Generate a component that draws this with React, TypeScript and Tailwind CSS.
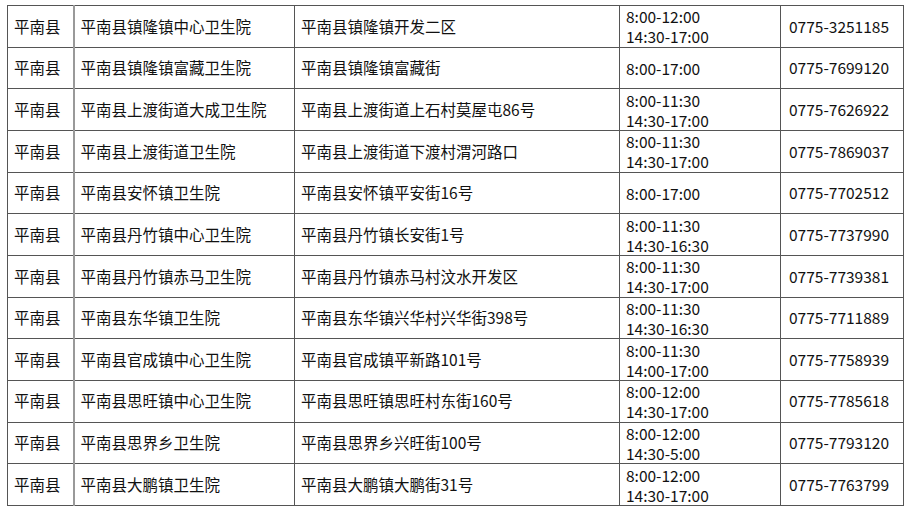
const rows: [string, string, string, string[], string][] = [
  ["平南县", "平南县镇隆镇中心卫生院", "平南县镇隆镇开发二区", ["8:00-12:00", "14:30-17:00"], "0775-3251185"],
  ["平南县", "平南县镇隆镇富藏卫生院", "平南县镇隆镇富藏街", ["8:00-17:00"], "0775-7699120"],
  ["平南县", "平南县上渡街道大成卫生院", "平南县上渡街道上石村莫屋屯86号", ["8:00-11:30", "14:30-17:00"], "0775-7626922"],
  ["平南县", "平南县上渡街道卫生院", "平南县上渡街道下渡村渭河路口", ["8:00-11:30", "14:30-17:00"], "0775-7869037"],
  ["平南县", "平南县安怀镇卫生院", "平南县安怀镇平安街16号", ["8:00-17:00"], "0775-7702512"],
  ["平南县", "平南县丹竹镇中心卫生院", "平南县丹竹镇长安街1号", ["8:00-11:30", "14:30-16:30"], "0775-7737990"],
  ["平南县", "平南县丹竹镇赤马卫生院", "平南县丹竹镇赤马村汶水开发区", ["8:00-11:30", "14:30-17:00"], "0775-7739381"],
  ["平南县", "平南县东华镇卫生院", "平南县东华镇兴华村兴华街398号", ["8:00-11:30", "14:30-16:30"], "0775-7711889"],
  ["平南县", "平南县官成镇中心卫生院", "平南县官成镇平新路101号", ["8:00-11:30", "14:00-17:00"], "0775-7758939"],
  ["平南县", "平南县思旺镇中心卫生院", "平南县思旺镇思旺村东街160号", ["8:00-12:00", "14:30-17:00"], "0775-7785618"],
  ["平南县", "平南县思界乡卫生院", "平南县思界乡兴旺街100号", ["8:00-12:00", "14:30-5:00"], "0775-7793120"],
  ["平南县", "平南县大鹏镇卫生院", "平南县大鹏镇大鹏街31号", ["8:00-12:00", "14:30-17:00"], "0775-7763799"],
];

export default function App() {
  return (
    <div
      className="w-[911px] h-[514px] bg-white pt-[5px] pl-[7px] text-[#111] text-[15.5px]"
      style={{ fontFamily: '"Noto Sans CJK SC", "Noto Sans", sans-serif' }}
    >
      <table className="border-collapse table-fixed w-[896px]">
        <colgroup>
          <col className="w-[66px]" />
          <col className="w-[221px]" />
          <col className="w-[325px]" />
          <col className="w-[161px]" />
          <col className="w-[123px]" />
        </colgroup>
        <tbody>
          {rows.map((r, i) => (
            <tr key={i} className="h-[41.67px]">
              <td className="border border-[#555] border-r-2 border-r-[#999] pl-[6px] leading-none">{r[0]}</td>
              <td className="border border-[#555] pl-[6px] leading-none">{r[1]}</td>
              <td className="border border-[#555] pl-[6px] leading-none">{r[2]}</td>
              <td className="border border-[#555] pl-[6px] leading-[20px]">
                {r[3].map((t) => (
                  <div key={t}>{t}</div>
                ))}
              </td>
              <td className="border border-[#555] pl-[8px] leading-none">{r[4]}</td>
            </tr>
          ))}
        </tbody>
      </table>
    </div>
  );
}
